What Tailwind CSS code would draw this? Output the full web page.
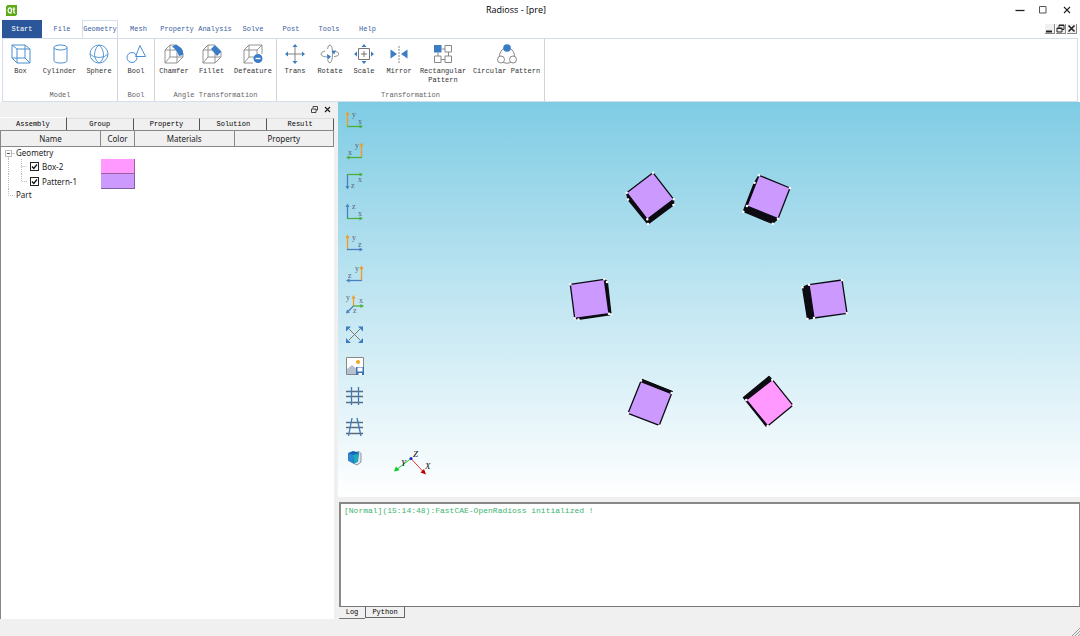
<!DOCTYPE html>
<html lang="en">
<head>
  <meta charset="UTF-8">
  <meta name="viewport" content="width=device-width, initial-scale=1.0">
  <title>Radioss - [pre]</title>
  <script src="https://cdn.jsdelivr.net/npm/@tailwindcss/browser@4"></script>
</head>
<body class="h-screen flex flex-col overflow-hidden bg-[#f0f0f0] font-['Liberation_Mono',monospace] text-[7px] leading-[9px] text-[#333]">

  <!-- Title bar -->
  <header class="bg-white h-5 shrink-0 flex items-center font-['Open_Sans',sans-serif]">
    <svg class="ml-[6px] w-[11px] h-[11px]" viewBox="0 0 11 11">
      <path d="M1.5 0H11v9.5L9.500 11H0V1.500z" fill="#5caa15"/>
      <g fill="none" stroke="#fff" stroke-width="1.200"><ellipse cx="3.800" cy="5.300" rx="1.700" ry="2.500"/><path d="M4 7.200l1.500 1.500M7.800 2.300v4.800q0 .9 1.400.7M6.600 4.200h2.500"/></g>
    </svg>
    <h1 class="flex-1 text-center text-[9px] leading-[12px] text-black">Radioss - [pre]</h1>
    <div class="flex justify-end items-center gap-[14px] pr-[9px]">
      <button aria-label="Minimize"><svg class="w-[10px] h-[10px]" viewBox="0 0 10 10"><path d="M.5 5.500h9" stroke="#222" stroke-width="1.300"/></svg></button>
      <button aria-label="Maximize"><svg class="w-[8px] h-[8px]" viewBox="0 0 8 8"><path d="M.5 .5h6.500v6.500H.5z" fill="none" stroke="#555"/></svg></button>
      <button aria-label="Close" class="ml-[2px]"><svg class="w-[8px] h-[8px]" viewBox="0 0 8 8"><path d="M1 1l6 6M7 1L1 7" stroke="#222" stroke-width="1.100"/></svg></button>
    </div>
  </header>

  <!-- Menu tabs -->
  <nav class="bg-white h-[18px] shrink-0 flex items-stretch pl-[2px] text-[#3d62a3]">
    <button class="w-10 mr-px bg-[#2b579a] text-white">Start</button>
    <button class="w-[38px]">File</button>
    <button class="w-[36px] mx-px border border-b-0 border-[#d5dfec]">Geometry</button>
    <button class="w-[39px]">Mesh</button>
    <button class="w-[38px]">Property</button>
    <button class="w-[38px]">Analysis</button>
    <button class="w-[38px]">Solve</button>
    <button class="w-[38px]">Post</button>
    <button class="w-[38px]">Tools</button>
    <button class="w-[39px]">Help</button>
    <div class="ml-auto mr-[3px] flex items-center gap-px">
      <button aria-label="Minimize view" class="w-[10px] h-[10px] bg-[#f0f0f0] border-r border-b border-[#888]"><svg class="w-full" viewBox="0 0 9 9"><path d="M1 7.500h6" stroke="#222" stroke-width="2"/></svg></button>
      <button aria-label="Restore view" class="w-[10px] h-[10px] bg-[#f0f0f0] border-r border-b border-[#888]"><svg class="w-full" viewBox="0 0 9 9" fill="none" stroke="#222"><path d="M3 3.500V1h5v4.500H6M3 1.500h5M1 4h5v4H1zM1 4.500h5"/></svg></button>
      <button aria-label="Close view" class="w-[10px] h-[10px] bg-[#f0f0f0] border-r border-b border-[#888]"><svg class="w-full" viewBox="0 0 9 9"><path d="M1.500 1.500l6 6M7.500 1.500l-6 6" stroke="#222" stroke-width="1.600"/></svg></button>
    </div>
  </nav>

  <!-- Ribbon -->
  <section class="bg-white h-[64px] shrink-0 px-[2px]">
    <div class="h-full flex border-x border-y border-[#d5dfec]">
      <div class="flex flex-col justify-between pt-[5px] pb-px">
        <div class="flex">
          <button class="w-[35px] flex flex-col items-center gap-[3px]">
            <svg class="w-5 h-5" viewBox="0 0 20 20" fill="none" stroke="#4a8fd0"><path d="M1 1h13v13H1zM6 5h13v14H6zM1 1l5 4M14 1l5 4M1 14l5 5M14 14l5 5"/></svg>
            Box
          </button>
          <button class="w-[43px] flex flex-col items-center gap-[3px]">
            <svg class="w-5 h-5" viewBox="0 0 20 20" fill="none" stroke="#4a8fd0"><ellipse cx="10.500" cy="3.500" rx="6.500" ry="2.500"/><path d="M4 3.500v13q0 2.500 6.500 2.500t6.500-2.500v-13"/></svg>
            Cylinder
          </button>
          <button class="w-[36px] flex flex-col items-center gap-[3px]">
            <svg class="w-5 h-5" viewBox="0 0 20 20" fill="none" stroke="#4a8fd0" stroke-width=".9"><circle cx="10" cy="10" r="9"/><path d="M10 1q-4.500 3-4.500 11Q7 17.500 10 19M10 1q5 4 4.500 12Q13 18 10 19M1 10q3 3.500 9 3.500t9-3.500"/></svg>
            Sphere
          </button>
        </div>
        <p class="text-center text-[#666]">Model</p>
      </div>

      <div class="flex flex-col justify-between pt-[5px] pb-px border-l border-[#d0d4d9]">
        <button class="w-[36px] flex flex-col items-center gap-[3px]">
          <svg class="w-5 h-5" viewBox="0 0 20 20" fill="none" stroke="#4a8fd0"><circle cx="6" cy="13.500" r="5"/><path d="M14 1.500L9.500 12.500h10z"/></svg>
          Bool
        </button>
        <p class="text-center text-[#666]">Bool</p>
      </div>

      <div class="flex flex-col justify-between pt-[5px] pb-px border-l border-[#d0d4d9]">
        <div class="flex">
          <button class="w-[38px] flex flex-col items-center gap-[3px]">
            <svg class="w-5 h-5" viewBox="0 0 20 20" fill="none" stroke="#888" stroke-width=".9"><path d="M1 6h12v13H1zM1 6l5-5h7M6 1v12h13M13 19l6-6V9M1 19l5-6"/><path d="M8 2.500L11 1h2q4 2 6 6v4l-4 1q-2-6-7-9.500z" fill="#3a7cc6" stroke="none"/></svg>
            Chamfer
          </button>
          <button class="w-[37px] flex flex-col items-center gap-[3px]">
            <svg class="w-5 h-5" viewBox="0 0 20 20" fill="none" stroke="#888" stroke-width=".9"><path d="M1 6h12v13H1zM1 6l5-5h7M6 1v12h13M13 19l6-6V8M1 19l5-6"/><path d="M9 5l4-4 6.500 6.500-4.500 4.500z" fill="#3a7cc6" stroke="none"/></svg>
            Fillet
          </button>
          <button class="w-[46px] flex flex-col items-center gap-[3px]">
            <svg class="w-5 h-5" viewBox="0 0 20 20" fill="none" stroke="#888" stroke-width=".9"><path d="M10 19H1V6h13v4M1 6l5-5h13L14 6M6 1v12h5M19 1v9M1 19l5-6"/><circle cx="15" cy="14.500" r="4.500" fill="#3a7cc6" stroke="none"/><path d="M12.500 14.500h5" stroke="#fff" stroke-width="1.400"/></svg>
            Defeature
          </button>
        </div>
        <p class="text-center text-[#666]">Angle Transformation</p>
      </div>

      <div class="flex flex-col justify-between pt-[5px] pb-px border-x border-[#d0d4d9]">
        <div class="flex items-start">
          <button class="w-[36px] flex flex-col items-center gap-[3px]">
            <svg class="w-5 h-5" viewBox="0 0 20 20"><path d="M10 3v14M3 10h14" stroke="#777" stroke-width=".9"/><path d="M10 0l2.500 3h-5zM10 20l2.500-3h-5zM0 10l3-2.500v5zM20 10l-3-2.500v5z" fill="#3a7cc6"/></svg>
            Trans
          </button>
          <button class="w-[34px] flex flex-col items-center gap-[3px]">
            <svg class="w-5 h-5" viewBox="0 0 20 20" fill="none" stroke="#888" stroke-width=".9"><path d="M7.500 5Q8 .8 10 1q2.500.5 2.500 8.500T10 19q-1.500 0-2.300-3M5 7q-4 1-4 3 0 3 8 3M13 7q6 .5 6 3 0 2-5 2.800"/><path d="M7 10l4 2.500L7.500 16zM11.500 7l4.500-.5-2 4z" fill="#3a7cc6" stroke="none"/></svg>
            Rotate
          </button>
          <button class="w-[34px] flex flex-col items-center gap-[3px]">
            <svg class="w-5 h-5" viewBox="0 0 20 20"><path d="M4.500 4.500h11v11h-11zM10 7v6M7 10h6" fill="none" stroke="#666" stroke-width=".9"/><path d="M10 0l2.500 3h-5zM10 20l2.500-3h-5zM0 10l3-2.500v5zM20 10l-3-2.500v5z" fill="#3a7cc6"/></svg>
            Scale
          </button>
          <button class="w-[36px] flex flex-col items-center gap-[3px]">
            <svg class="w-5 h-5" viewBox="0 0 20 20"><path d="M1.500 5.500L8 10l-6.500 4.500zM18.500 5.500L12 10l6.500 4.500z" fill="#3a7cc6"/><path d="M10 2v17" stroke="#888" stroke-dasharray="2 1"/></svg>
            Mirror
          </button>
          <button class="w-[52px] flex flex-col items-center gap-[3px]">
            <svg class="w-5 h-5" viewBox="0 0 20 20" fill="none" stroke="#888"><path d="M1 1h7.500v7.500H1z" fill="#3a7cc6" stroke="none"/><path d="M12 1.500h6.500v6.500H12zM1.500 12H8v6.500H1.500zM12 12h6.500v6.500H12zM8.500 5H12M5 8.500V12M15.500 8v4M8 15.500h4"/></svg>
            <span>Rectangular<br>Pattern</span>
          </button>
          <button class="w-[75px] flex flex-col items-center gap-[3px]">
            <svg class="w-5 h-5" viewBox="0 0 20 20" fill="none" stroke="#888"><path d="M7 4.500Q2.500 7 2.500 12.500M13 4.500q4.500 2.500 4.500 8M6 18.500q4 1.500 8 0"/><circle cx="10" cy="4" r="3.800" fill="#3a7cc6" stroke="none"/><circle cx="4" cy="15.500" r="3.500" fill="#fff"/><circle cx="16" cy="15.500" r="3.500" fill="#fff"/></svg>
            Circular Pattern
          </button>
        </div>
        <p class="text-center text-[#666]">Transformation</p>
      </div>
    </div>
  </section>

  <!-- Work area -->
  <main class="flex-1 min-h-0 flex gap-1">

    <!-- Model tree dock -->
    <aside class="w-[334px] shrink-0 flex flex-col">
      <div class="h-[14px] flex justify-end items-center gap-[6px] pr-[3px]">
        <button aria-label="Float"><svg class="block w-[7px] h-[7px]" viewBox="0 0 7 7" fill="none" stroke="#333" stroke-width=".9"><path d="M2 2.500V.5h4.500v3.500H5M.5 3H5v3.500H.5z"/></svg></button>
        <button aria-label="Close dock"><svg class="block w-[7px] h-[7px]" viewBox="0 0 7 7"><path d="M1 1l5 5M6 1L1 6" stroke="#222" stroke-width="1.200"/></svg></button>
      </div>
      <div class="h-[14px] grid grid-cols-5 items-end text-black">
        <button class="h-[13px] border-r border-t border-t-white border-r-[#555]">Assembly</button>
        <button class="h-3 border-r border-t border-t-[#ddd] border-r-[#555]">Group</button>
        <button class="h-3 border-r border-t border-t-[#ddd] border-r-[#555]">Property</button>
        <button class="h-3 border-r border-t border-t-[#ddd] border-r-[#555]">Solution</button>
        <button class="h-3 border-r border-t border-t-[#ddd] border-r-[#555]">Result</button>
      </div>
      <div class="flex-1 bg-white border-l border-[#888]">
        <table class="w-full table-fixed border-separate border-spacing-0 font-['Noto_Sans',sans-serif] text-[8px] leading-[12px] text-[#222]">
          <colgroup><col class="w-[100px]"><col class="w-[34px]"><col><col></colgroup>
          <thead>
            <tr class="h-[17px] bg-[#f0f0f0]">
              <th class="p-0 font-normal border-y border-r border-[#888]">Name</th>
              <th class="p-0 font-normal border-y border-r border-[#888]">Color</th>
              <th class="p-0 font-normal border-y border-r border-[#888]">Materials</th>
              <th class="p-0 font-normal border-y border-r border-[#888]">Property</th>
            </tr>
          </thead>
          <tbody>
            <tr>
              <td class="p-0" colspan="4"><div class="flex items-center h-3">
                <svg class="w-[15px] h-3" viewBox="0 0 15 12" fill="none"><path d="M7.500 9v3M10 6.500h4" stroke="#ccc"/><path d="M4.500 3.500h6v6h-6z" stroke="#bbb"/><path d="M6 6.500h3" stroke="#555"/></svg>Geometry
              </div></td>
            </tr>
            <tr>
              <td class="p-0"><label class="flex items-center h-[15px]">
                <svg class="w-[29px] h-[15px]" viewBox="0 0 29 15"><path d="M7.500 0v15M20.500 0v15M20.500 7.500h6" fill="none" stroke="#bbb" stroke-dasharray="1 1"/></svg>
                <span class="grid w-[9px] h-[9px] mr-[3px] shrink-0">
                  <input type="checkbox" checked class="peer appearance-none [grid-area:1/1] w-[9px] h-[9px] border border-[#222] bg-white">
                  <svg class="[grid-area:1/1] w-[9px] h-[9px] invisible peer-checked:visible pointer-events-none" viewBox="0 0 9 9"><path d="M2 4.500l1.800 2L7 2.500" fill="none" stroke="#111" stroke-width="1.300"/></svg>
                </span>Box-2
              </label></td>
              <td class="p-0 bg-[#ff99ff] border-r border-b border-[#a060a0]"></td><td></td><td></td>
            </tr>
            <tr>
              <td class="p-0"><label class="flex items-center h-[15px]">
                <svg class="w-[29px] h-[15px]" viewBox="0 0 29 15"><path d="M7.500 0v15M20.500 0v7.500h6" fill="none" stroke="#bbb" stroke-dasharray="1 1"/></svg>
                <span class="grid w-[9px] h-[9px] mr-[3px] shrink-0">
                  <input type="checkbox" checked class="peer appearance-none [grid-area:1/1] w-[9px] h-[9px] border border-[#222] bg-white">
                  <svg class="[grid-area:1/1] w-[9px] h-[9px] invisible peer-checked:visible pointer-events-none" viewBox="0 0 9 9"><path d="M2 4.500l1.800 2L7 2.500" fill="none" stroke="#111" stroke-width="1.300"/></svg>
                </span>Pattern-1
              </label></td>
              <td class="p-0 bg-[#cc99ff] border-r border-b border-[#8060a0]"></td><td></td><td></td>
            </tr>
            <tr>
              <td class="p-0" colspan="4"><div class="flex items-center h-3">
                <svg class="w-[15px] h-3" viewBox="0 0 15 12"><path d="M7.500 0v6.500h6" fill="none" stroke="#bbb" stroke-dasharray="1 1"/></svg>Part
              </div></td>
            </tr>
          </tbody>
        </table>
      </div>
    </aside>

    <div class="flex-1 min-w-0 flex flex-col">
      <!-- 3D view -->
      <section class="relative flex-1 min-h-0 bg-linear-to-b from-[#7ecce4] to-white">
        <svg class="w-full h-full" viewBox="338 102 742 395" stroke-linejoin="round">
          <g stroke="#0d0b12" stroke-width="1.300">
            <g fill="#0d0b12">
              <path d="M626.700 193L628 199.500 648 224 673.500 205 673.700 199.500 647.300 219z"/>
              <path d="M759 175.500L754.500 182.500 743.300 211.500 772.500 223.500 778 218.500 747 206z"/>
              <path d="M604.500 279.500L607.300 281.500 611 314.500 578.500 319.300 574.700 318 609 313.500z"/>
              <path d="M809 284.700L802.500 287.300 807.500 319 814 318z"/>
              <path d="M641 380.500L642.500 379.500 672.300 391.500 671.500 393.500z"/>
              <path d="M772 379.500L769 376.500 743.500 397.500 766 426 768 426 746.500 400z"/>
            </g>
            <g fill="#cc99ff">
              <path d="M653 172.700L673.700 199.300 647.300 219.300 626.700 192.700z"/>
              <path d="M759 175.300L790 188 778 218.700 747 206z"/>
              <path d="M570.300 284.300L604.300 279.300 609 313.700 574.700 318.300z"/>
              <path d="M809 284.700L842 280 847 313.300 814 318z"/>
              <path d="M641 381L671.700 393.300 659.300 425.300 628 413.300z"/>
              <path d="M772.300 379.700L793 405.300 767.700 426 746.300 400z" fill="#ff99ff"/>
            </g>
            <path d="M642 381l29.500 11.500" stroke-width="3"/>
          </g>
          <!-- vertices -->
          <path stroke="#fff" stroke-width="2.600" stroke-linecap="round" d="M653 172.700h0M673.700 199.300h0M647.300 219.300h0M626.700 192.700h0M628 199.500h0M648 224h0M673.500 205h0M759 175.300h0M790 188h0M778 218.700h0M747 206h0M743.300 211.700h0M772.700 223.700h0M754.500 182.700h0M570.300 284.300h0M604.300 279.300h0M609 313.700h0M574.700 318.300h0M607 282h0M611 314.500h0M578.500 319.500h0M809 284.700h0M842 280h0M847 313.300h0M814 318h0M802.500 287.300h0M807.500 319h0M641 380.500h0M671.700 393h0M659.300 425.700h0M628 413.300h0M772.300 379.700h0M793.300 405.300h0M767.700 426h0M746.300 400h0"/>
          <!-- axis triad -->
          <path d="M411 458.500L398 468.500" stroke="#22cc33"/><path d="M394 471.500l2-5 3.500 3.800z" fill="#0c2"/>
          <path d="M411 458.500L423 471.500" stroke="#e33"/><path d="M426 474.500l-5.500-2 3.500-3.500z" fill="#b00"/>
          <circle cx="411" cy="458.500" r="1.500" fill="#12d"/>
          <g class="font-['Liberation_Serif',serif] italic text-[9px]" fill="#111"><text x="413" y="457">Z</text><text x="401" y="466">Y</text><text x="425" y="469">X</text></g>
        </svg>

        <!-- View toolbar -->
        <div class="absolute left-[7px] top-[8px] flex flex-col justify-between h-[358px] font-['Liberation_Serif',serif] text-[8px]">
          <button aria-label="Front view"><svg class="block w-5 h-5" viewBox="0 0 20 20" stroke-width="1.300"><path d="M2.500 17V4" stroke="#f39a1e"/><path d="M.5 5l2-3.500 2 3.500z" fill="#f39a1e"/><path d="M2 16.500h13.500" stroke="#4caf3c"/><path d="M14.500 14.500l3.500 2-3.500 2z" fill="#4caf3c"/><text x="7" y="7" fill="#567">y</text><text x="13" y="14" fill="#567">x</text></svg></button>
          <button aria-label="Back view"><svg class="block w-5 h-5" viewBox="0 0 20 20" stroke-width="1.300"><path d="M16.500 17V4" stroke="#f39a1e"/><path d="M14.500 5l2-3.500 2 3.500z" fill="#f39a1e"/><path d="M17 16.500H4" stroke="#4caf3c"/><path d="M4.500 14.500l-3.500 2 3.500 2z" fill="#4caf3c"/><text x="10" y="7" fill="#567">y</text><text x="3" y="14" fill="#567">x</text></svg></button>
          <button aria-label="Top view"><svg class="block w-5 h-5" viewBox="0 0 20 20" stroke-width="1.300"><path d="M2.500 3v13" stroke="#4a80c0"/><path d="M.5 15l2 3.500 2-3.500z" fill="#4a80c0"/><path d="M2 3.500h13.500" stroke="#4caf3c"/><path d="M14.500 1.500l3.500 2-3.500 2z" fill="#4caf3c"/><text x="13" y="11" fill="#567">x</text><text x="6" y="17" fill="#567">z</text></svg></button>
          <button aria-label="Bottom view"><svg class="block w-5 h-5" viewBox="0 0 20 20" stroke-width="1.300"><path d="M2.500 17V4" stroke="#4a80c0"/><path d="M.5 5l2-3.500 2 3.500z" fill="#4a80c0"/><path d="M2 16.500h13.500" stroke="#4caf3c"/><path d="M14.500 14.500l3.500 2-3.500 2z" fill="#4caf3c"/><text x="7" y="7" fill="#567">z</text><text x="13" y="14" fill="#567">x</text></svg></button>
          <button aria-label="Right view"><svg class="block w-5 h-5" viewBox="0 0 20 20" stroke-width="1.300"><path d="M2.500 17V4" stroke="#f39a1e"/><path d="M.5 5l2-3.500 2 3.500z" fill="#f39a1e"/><path d="M2 16.500h13.500" stroke="#4a80c0"/><path d="M14.500 14.500l3.500 2-3.500 2z" fill="#4a80c0"/><text x="7" y="7" fill="#567">y</text><text x="13" y="14" fill="#567">z</text></svg></button>
          <button aria-label="Left view"><svg class="block w-5 h-5" viewBox="0 0 20 20" stroke-width="1.300"><path d="M16.500 17V4" stroke="#f39a1e"/><path d="M14.500 5l2-3.500 2 3.500z" fill="#f39a1e"/><path d="M17 16.500H4" stroke="#4a80c0"/><path d="M4.500 14.500l-3.500 2 3.500 2z" fill="#4a80c0"/><text x="10" y="7" fill="#567">y</text><text x="3" y="14" fill="#567">z</text></svg></button>
          <button aria-label="Isometric view"><svg class="block w-5 h-5" viewBox="0 0 20 20" stroke-width="1.300"><path d="M8.500 12V4" stroke="#f39a1e"/><path d="M6.500 4.500l2-3.500 2 3.500z" fill="#f39a1e"/><path d="M8.500 12h8" stroke="#4caf3c"/><path d="M15.500 10l3.500 2-3.500 2z" fill="#4caf3c"/><path d="M8.500 12L3 17.500" stroke="#4a80c0"/><path d="M1 19.500l1-4 3 3z" fill="#4a80c0"/><text x="1" y="6" fill="#567">y</text><text x="14" y="9" fill="#567">x</text><text x="8" y="19" fill="#567">z</text></svg></button>
          <button aria-label="Fit view"><svg class="block w-5 h-5" viewBox="0 0 20 20"><path d="M4 4l11 11M15 4L4 15" stroke="#777"/><path d="M1 1.500h5L1 6.500zM18 1.500v5l-5-5zM18 18h-5l5-5zM1 18v-5l5 5z" fill="#3a7cc6"/></svg></button>
          <button aria-label="Save picture"><svg class="block w-5 h-5" viewBox="0 0 20 20"><path d="M1.500 1.500h17v17h-17z" fill="#fff" stroke="#888"/><path d="M2 18v-5l5-4 6 5v4z" fill="#b5c1d1"/><circle cx="13" cy="6" r="2" fill="#f5a623"/><path d="M11 11h8v8h-8z" fill="#3d73b5"/><path d="M12.500 11.500h5v4h-5zM13.500 17h3.500v2h-3.500z" fill="#fff"/></svg></button>
          <button aria-label="Parallel projection"><svg class="block w-5 h-5" viewBox="0 0 20 20" fill="none" stroke-width="1.300"><path d="M1 5.500h17M1 10.500h17M1 16.500h17" stroke="#5b6b7c"/><path d="M6.500 1v18M13.500 1v18" stroke="#3d7cbc"/></svg></button>
          <button aria-label="Perspective projection"><svg class="block w-5 h-5" viewBox="0 0 20 20" fill="none" stroke-width="1.300"><path d="M1 5.500h17M1 10.500h17M1 16.500h17" stroke="#5b6b7c"/><path d="M7 1L3.500 19M12 1l4 18" stroke="#3d7cbc"/></svg></button>
          <button aria-label="Clip box"><svg class="block w-5 h-5" viewBox="0 0 20 20"><path d="M9 5l5-1.500 2 2v8.500l-4 3-4-2" fill="#dfe8f0" stroke="#8a929b"/><path d="M3 5l5-2 6 1.500-1 9-4 2-6-3z" fill="#1565b5"/><path d="M3 5l5 2v8.500l-5-3z" fill="#2d87d0"/><path d="M8 7l5-1.500v8l-4 2z" fill="#1aa9bb"/></svg></button>
        </div>
      </section>

      <!-- Log output -->
      <section class="shrink-0 mt-[5px] pl-px">
        <div class="h-[105px] bg-white border-2 border-[#888] border-b-[#777] border-r border-b pt-px pl-[3px] text-[8px] leading-[12px] text-[#3cb371]">[Normal](15:14:48):FastCAE-OpenRadioss initialized !</div>
        <div class="flex items-start h-3 text-black">
          <button class="w-[26px] h-3 border-b border-[#777]">Log</button>
          <button class="w-10 h-[11px] border border-t-0 border-[#666]">Python</button>
        </div>
      </section>
    </div>
  </main>

  <!-- Status bar -->
  <footer class="h-[17px] shrink-0 flex justify-end items-end">
    <svg class="w-2 h-2" viewBox="0 0 8 8"><path d="M0 8l8-8M3 8l5-5M6 8l2-2" stroke="#999"/></svg>
  </footer>
</body>
</html>
